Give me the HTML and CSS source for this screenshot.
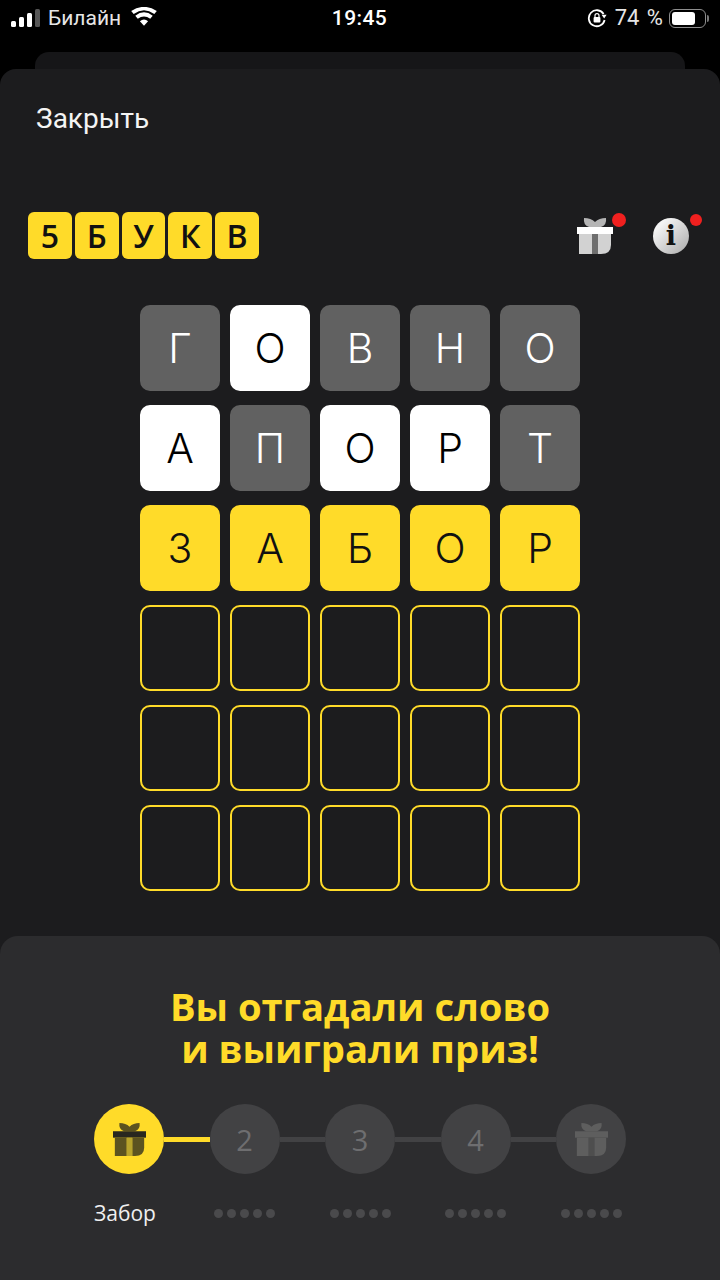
FILE: index.html
```html
<!DOCTYPE html>
<html lang="ru">
<head>
<meta charset="utf-8">
<title>5 букв</title>
<link rel="stylesheet" href="styles.css">
</head>
<body>
<svg class="defs" width="0" height="0" aria-hidden="true">
  <symbol id="gift" viewBox="0 0 36 36">
    <path class="g-bow" d="M7 0 Q14 0 18 4 Q22 0 29 0 Q30 7 24 9 L12 9 Q6 7 7 0 Z"/>
    <rect class="g-lid" x="0" y="9" width="36" height="7"/>
    <path class="g-body" d="M2 16 H15 V36 H2 Z"/>
    <path class="g-body" d="M21 16 H34 V27 Q34 36 24 36 H21 Z"/>
    <rect class="g-rib" x="15" y="16" width="6" height="20"/>
  </symbol>
</svg>
<div class="status">
  <div class="status-left">
    <svg class="signal" width="31" height="18" viewBox="0 0 31 18">
      <rect x="0" y="12" width="5" height="6" rx="1.5" fill="#fff"/>
      <rect x="8" y="8" width="5" height="10" rx="1.5" fill="#fff"/>
      <rect x="16" y="4" width="5" height="14" rx="1.5" fill="#fff"/>
      <rect x="24" y="0" width="5" height="18" rx="1.5" fill="#555"/>
    </svg>
    <span>Билайн</span>
    <svg class="wifi" width="26" height="19" viewBox="0 0 28 20">
      <path d="M14 20 L9.6 15 Q14 11.4 18.4 15 Z" fill="#fff"/>
      <path d="M7.3 12.4 L4.6 9.3 Q14 1.8 23.4 9.3 L20.7 12.4 Q14 7.4 7.3 12.4 Z" fill="#fff"/>
      <path d="M2.9 7.3 L0.2 4.2 Q14 -5 27.8 4.2 L25.1 7.3 Q14 -0.6 2.9 7.3 Z" fill="#fff"/>
    </svg>
  </div>
  <div class="status-time">19:45</div>
  <div class="status-right">
    <svg class="lock" width="20" height="20" viewBox="0 0 20 20">
      <path d="M16.6 6 A8 8 0 1 0 17.6 12" fill="none" stroke="#fff" stroke-width="1.8"/>
      <path d="M14.6 6.8 L19.6 6.8 L17.2 10.6 Z" fill="#fff"/>
      <rect x="6.6" y="9" width="6.8" height="5.6" rx="1" fill="#fff"/>
      <path d="M8 9.4 V7.6 A2 2 0 0 1 12 7.6 V9.4" fill="none" stroke="#fff" stroke-width="1.2"/>
    </svg>
    <span class="percent">74 %</span>
    <div class="battery"><div class="battery-fill"></div></div>
    <div class="battery-cap"></div>
  </div>
</div>
<div class="sheet-back"></div>
<main class="sheet">
  <div class="close">Закрыть</div>
  <header class="bar">
    <div class="logo">
      <span class="logo-tile">5</span>
      <span class="logo-tile">Б</span>
      <span class="logo-tile">У</span>
      <span class="logo-tile">К</span>
      <span class="logo-tile">В</span>
    </div>
    <div class="tools">
      <div class="tool">
        <svg class="gift gift-light" width="36" height="36"><use href="#gift"/></svg>
        <span class="dot dot-gift"></span>
      </div>
      <div class="tool">
        <div class="info">i</div>
        <span class="dot dot-info"></span>
      </div>
    </div>
  </header>
  <section class="grid">
    <div class="cell miss">Г</div><div class="cell hit">О</div><div class="cell miss">В</div><div class="cell miss">Н</div><div class="cell miss">О</div>
    <div class="cell hit">А</div><div class="cell miss">П</div><div class="cell hit">О</div><div class="cell hit">Р</div><div class="cell miss">Т</div>
    <div class="cell win">З</div><div class="cell win">А</div><div class="cell win">Б</div><div class="cell win">О</div><div class="cell win">Р</div>
    <div class="cell"></div><div class="cell"></div><div class="cell"></div><div class="cell"></div><div class="cell"></div>
    <div class="cell"></div><div class="cell"></div><div class="cell"></div><div class="cell"></div><div class="cell"></div>
    <div class="cell"></div><div class="cell"></div><div class="cell"></div><div class="cell"></div><div class="cell"></div>
  </section>
  <section class="panel">
    <h1 class="title">Вы отгадали слово<br>и выиграли приз!</h1>
    <div class="steps">
      <div class="step step-on"><svg class="gift gift-dark" width="33" height="33"><use href="#gift"/></svg></div>
      <div class="link link-on"></div>
      <div class="step">2</div>
      <div class="link"></div>
      <div class="step">3</div>
      <div class="link"></div>
      <div class="step">4</div>
      <div class="link"></div>
      <div class="step"><svg class="gift gift-grey" width="33" height="33"><use href="#gift"/></svg></div>
    </div>
    <div class="labels">
      <div class="label">Забор</div>
      <div class="pips"><i></i><i></i><i></i><i></i><i></i></div>
      <div class="pips"><i></i><i></i><i></i><i></i><i></i></div>
      <div class="pips"><i></i><i></i><i></i><i></i><i></i></div>
      <div class="pips"><i></i><i></i><i></i><i></i><i></i></div>
    </div>
  </section>
</main>
</body>
</html>
```

FILE: styles.css
```css
* { box-sizing: border-box; }
html, body { margin: 0; height: 1280px; }
body {
  background: #000;
  color: #fff;
  font-family: "Roboto", "Liberation Sans", sans-serif;
  overflow: hidden;
  display: flex;
  flex-direction: column;
}
.defs { position: absolute; }

.status {
  height: 52px;
  flex: none;
  display: grid;
  grid-template-columns: 1fr auto 1fr;
  align-items: start;
  padding: 7px 11px 0 11px;
  font-size: 21px;
  line-height: 22px;
}
.status-left { display: flex; align-items: center; gap: 6px; color: #e6e6e6; }
.signal { flex: none; }
.wifi { margin-left: 4px; margin-top: -3px; }
.status-time { font-weight: 500; letter-spacing: 0.4px; margin-left: -1px; }
.status-right { display: flex; align-items: center; justify-content: flex-end; gap: 6px; color: #e6e6e6; }
.lock { margin-right: 2px; }
.percent { font-size: 22px; word-spacing: 2px; }
.battery {
  width: 37px; height: 19px;
  border: 1.5px solid #8e8e8e;
  border-radius: 6px;
  padding: 2px;
}
.battery-fill { width: 74%; height: 100%; background: #fff; border-radius: 3px; }
.battery-cap { width: 2px; height: 7px; background: #777; border-radius: 0 2px 2px 0; margin-left: -5px; }

.sheet-back {
  height: 17px;
  flex: none;
  margin: 0 35px;
  background: #161618;
  border-radius: 14px 14px 0 0;
}
.sheet {
  flex: 1;
  display: flex;
  flex-direction: column;
  background: #1c1c1e;
  border-radius: 16px 16px 0 0;
  min-height: 0;
}
.close {
  margin: 32px 0 0 36px;
  font-size: 28px;
  line-height: 36px;
  font-weight: 400;
  color: #f4f4f4;
}
.bar {
  margin-top: 75px;
  padding: 0 31px 0 28px;
  display: flex;
  justify-content: space-between;
  align-items: center;
}
.logo { display: flex; gap: 3px; }
.logo-tile {
  width: 43.8px; height: 47px;
  background: #ffdb29;
  border-radius: 6px;
  color: #111;
  font-family: "Open Sans", sans-serif;
  font-weight: 600;
  font-size: 32px;
  display: flex;
  align-items: center;
  justify-content: center;
}
.tools { display: flex; gap: 40px; }
.tool { position: relative; width: 36px; height: 36px; }
.gift { display: block; }
.gift-light { --bow: #b5b5b5; --lid: #ffffff; --body: #d2d2d2; --rib: #6e6e6e; }
.gift-dark { --bow: #5c5320; --lid: #28271f; --body: #5c5320; --rib: #b8a42c; }
.gift-grey { --bow: #5e5e5e; --lid: #5e5e5e; --body: #5e5e5e; --rib: #4e4e4e; }
.g-bow { fill: var(--bow); }
.g-lid { fill: var(--lid); }
.g-body { fill: var(--body); }
.g-rib { fill: var(--rib); }
.info {
  width: 36px; height: 36px;
  border-radius: 50%;
  background: linear-gradient(135deg, #f4f4f4 20%, #a9a9a9 100%);
  color: #111;
  font-family: "DejaVu Serif", "Liberation Serif", serif;
  font-weight: 700;
  font-size: 27px;
  line-height: 36px;
  text-align: center;
}
.dot { position: absolute; background: #f0201f; border-radius: 50%; }
.dot-gift { width: 14px; height: 14px; left: 35px; top: -5px; }
.dot-info { width: 12px; height: 12px; left: 37px; top: -4px; }

.grid {
  margin: 46px auto 0;
  width: 440px;
  display: grid;
  grid-template-columns: repeat(5, 80px);
  grid-auto-rows: 85.5px;
  gap: 14.5px 10px;
}
.cell {
  border: 2px solid #ffdb29;
  border-radius: 10px;
  display: flex;
  align-items: center;
  justify-content: center;
  font-family: "Inter", "Liberation Sans", sans-serif;
  font-size: 41px;
  font-weight: 300;
}
.miss { background: #616161; border-color: #616161; color: #fff; }
.hit { background: #fff; border-color: #fff; color: #000; }
.win { background: #ffdb29; border-color: #ffdb29; color: #111; }

.panel {
  margin-top: 45.5px;
  flex: 1;
  background: #2c2c2e;
  border-radius: 18px 18px 0 0;
  padding: 49px 94px 0 94px;
}
.title {
  margin: 0;
  text-align: center;
  color: #ffdb29;
  font-family: "Open Sans", sans-serif;
  font-weight: 700;
  font-size: 38.2px;
  line-height: 42px;
  white-space: nowrap;
}
.steps {
  margin-top: 35px;
  display: flex;
  align-items: center;
}
.step {
  width: 70px; height: 70px;
  flex: none;
  border-radius: 50%;
  background: #424244;
  color: #6e6e70;
  font-family: "Open Sans", sans-serif;
  font-size: 29px;
  display: flex;
  align-items: center;
  justify-content: center;
}
.step-on { background: #ffdb29; }
.link { flex: 1; height: 5px; background: #424244; }
.link-on { background: #ffdb29; }
.labels {
  margin-top: 25px;
  display: grid;
  grid-template-columns: repeat(5, 70px);
  justify-content: space-between;
  align-items: center;
  height: 28px;
}
.label {
  font-family: "Open Sans", sans-serif;
  font-size: 21px;
  line-height: 28px;
  color: #f0f0f0;
  white-space: nowrap;
}
.pips { display: flex; justify-content: center; gap: 4px; }
.pips i { width: 9px; height: 9px; border-radius: 50%; background: #4a4a4c; }
```
